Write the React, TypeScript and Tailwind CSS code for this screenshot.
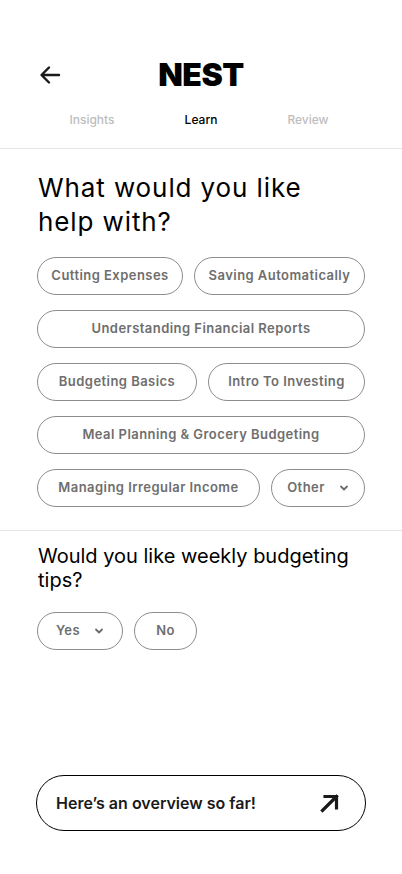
import React from "react";

function Chevron() {
  return (
    <svg width="10" height="10" viewBox="0 0 10 10" fill="none">
      <path d="M2 3.5 L5 6.5 L8 3.5" stroke="#6b6b6b" strokeWidth="1.8" strokeLinecap="round" strokeLinejoin="round" />
    </svg>
  );
}

function Chip({ label, className = "", chevron = false }: { label: string; className?: string; chevron?: boolean }) {
  return (
    <div
      className={`h-[38px] rounded-full border border-[#8c8c8c] flex items-center justify-center gap-[14px] text-[13px] font-semibold tracking-[0.45px] text-[#6e6e6e] whitespace-nowrap ${className}`}
    >
      <span>{label}</span>
      {chevron && <Chevron />}
    </div>
  );
}

export default function App() {
  return (
    <div className="w-[402px] h-[874px] bg-white flex flex-col" style={{ fontFamily: "Inter, 'Noto Sans', sans-serif" }}>
      <div className="pt-[58px] px-[37px] flex items-center relative h-[94px]">
        <svg width="24" height="24" viewBox="0 0 24 24" fill="none" className="ml-[1px] mt-[-2px]">
          <path d="M21 12 H4 M11 4.5 L3.5 12 L11 19.5" stroke="#1a1a1a" strokeWidth="2.4" strokeLinecap="round" strokeLinejoin="round" />
        </svg>
        <div className="absolute left-0 right-0 top-[55px] text-center text-[32px] font-black tracking-[-0.5px] text-black leading-[40px] pointer-events-none">
          NEST
        </div>
      </div>
      <div className="flex h-[54px] pt-[2px] pb-[4px] items-center text-[12px] font-medium">
        <div className="w-[184px] text-center text-[#bdbdbd]">Insights</div>
        <div className="w-[34px] text-center text-black">Learn</div>
        <div className="flex-1 text-center text-[#bdbdbd] pr-[4px]">Review</div>
      </div>
      <div className="h-px bg-[#e5e5e5]" />
      <div className="px-[38px] pt-[22px]">
        <h1 className="text-[26px] leading-[34px] tracking-[0.9px] text-black font-normal">What would you like<br />help with?</h1>
      </div>
      <div className="px-[37px] pt-[18px] flex flex-col gap-[15px] w-[402px]">
        <div className="flex gap-[11px]">
          <Chip label="Cutting Expenses" className="w-[146px]" />
          <Chip label="Saving Automatically" className="flex-1" />
        </div>
        <div className="flex">
          <Chip label="Understanding Financial Reports" className="flex-1" />
        </div>
        <div className="flex gap-[11px]">
          <Chip label="Budgeting Basics" className="w-[160px]" />
          <Chip label="Intro To Investing" className="flex-1" />
        </div>
        <div className="flex">
          <Chip label="Meal Planning & Grocery Budgeting" className="flex-1" />
        </div>
        <div className="flex gap-[11px]">
          <Chip label="Managing Irregular Income" className="w-[223px]" />
          <Chip label="Other" className="flex-1" chevron />
        </div>
      </div>
      <div className="h-px bg-[#e5e5e5] mt-[23px]" />
      <div className="px-[38px] pt-[13px]">
        <h2 className="text-[20px] leading-[24px] text-black font-normal">Would you like weekly budgeting<br />tips?</h2>
      </div>
      <div className="px-[37px] pt-[20px] flex gap-[11px]">
        <Chip label="Yes" className="w-[86px]" chevron />
        <Chip label="No" className="w-[63px]" />
      </div>
      <div className="flex-1" />
      <div className="px-[36px] pb-[43px]">
        <div className="h-[56px] rounded-full border-[1.5px] border-black flex items-center justify-between pl-[19px] pr-[24px]">
          <span className="text-[16px] font-semibold text-[#1a1a1a]">Here’s an overview so far!</span>
          <svg width="22" height="22" viewBox="0 0 22 22" fill="none">
            <path d="M3.5 18.5 L17.5 4.5 M6 4.5 H17.5 V16" stroke="#1a1a1a" strokeWidth="3.2" strokeLinecap="square" />
          </svg>
        </div>
      </div>
    </div>
  );
}
